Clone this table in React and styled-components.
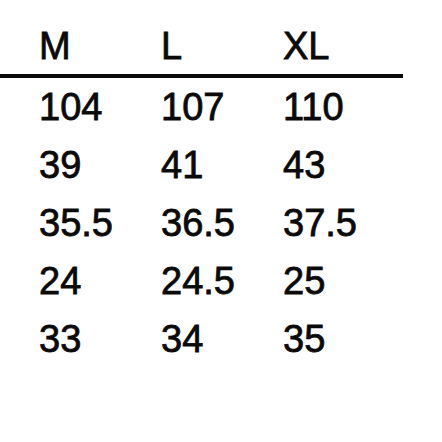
import React from "react";
import styled, { createGlobalStyle } from "styled-components";

const Global = createGlobalStyle`
  html, body { margin: 0; padding: 0; background: #fff; }
  body { font-family: "Liberation Sans", Arial, sans-serif; color: #0a0a0a; }
`;

const Table = styled.div`
  width: 403px;
  padding-top: 18px;
`;

const Row = styled.div`
  display: grid;
  grid-template-columns: 122px 122px 1fr;
  padding-left: 39px;
  font-size: 38px;
  -webkit-text-stroke: 0.8px #0a0a0a;
  line-height: ${(p) => (p.$head ? "56px" : "58px")};
  height: ${(p) => (p.$head ? "56px" : "58px")};
  border-bottom: ${(p) => (p.$head ? "4px solid #0a0a0a" : "none")};
`;

const Cell = styled.div`
  white-space: nowrap;
`;

const header = ["M", "L", "XL"];
const rows = [
  ["104", "107", "110"],
  ["39", "41", "43"],
  ["35.5", "36.5", "37.5"],
  ["24", "24.5", "25"],
  ["33", "34", "35"],
];

export default function App() {
  return (
    <>
      <Global />
      <Table>
        <Row $head>
          {header.map((h) => (
            <Cell key={h}>{h}</Cell>
          ))}
        </Row>
        {rows.map((r, i) => (
          <Row key={i}>
            {r.map((c, j) => (
              <Cell key={j}>{c}</Cell>
            ))}
          </Row>
        ))}
      </Table>
    </>
  );
}
